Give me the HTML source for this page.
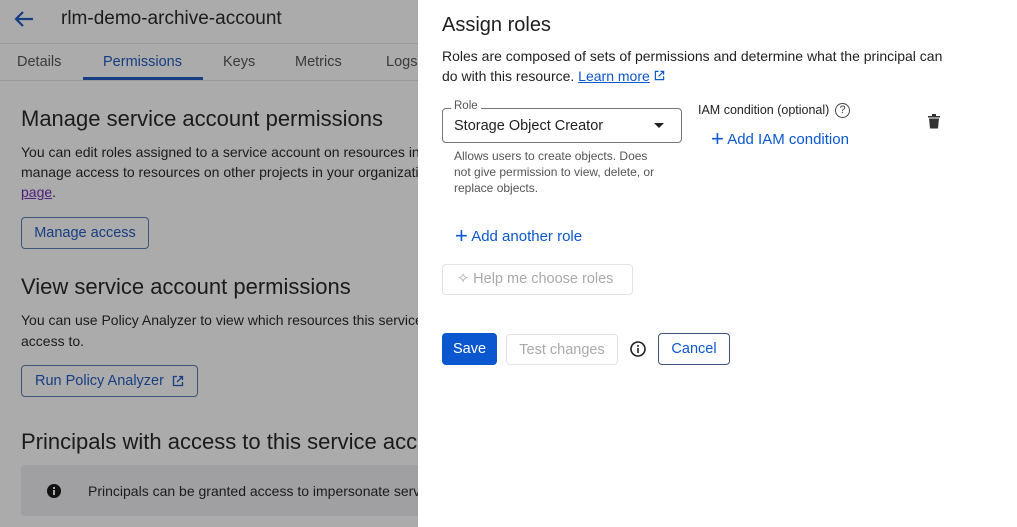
<!DOCTYPE html>
<html><head><meta charset="utf-8"><style>
*{margin:0;padding:0;box-sizing:border-box}
body{width:1017px;height:527px;overflow:hidden;position:relative;font-family:"Liberation Sans",Arial,sans-serif;background:#fff}
.left{position:absolute;left:0;top:0;width:418px;height:527px;background:#ababab;overflow:hidden;color:#1b1b1b}
.a{position:absolute;white-space:nowrap}
.right{position:absolute;left:418px;top:0;width:599px;height:527px;background:#fff;color:#1f1f1f}
.btno{position:absolute;border:1px solid #3f5478;border-radius:4px;color:#173d82;font-size:14.5px;display:flex;align-items:center;justify-content:center}
</style></head><body>
<div class="left">
  <svg class="a" style="left:13px;top:10px" width="22" height="18" viewBox="0 0 22 18"><path d="M20 9H3M10 2L3 9l7 7" stroke="#173d82" stroke-width="2.2" fill="none"/></svg>
  <div class="a" style="left:61px;top:8px;font-size:19px;color:#1b1b1b">rlm-demo-archive-account</div>
  <div class="a" style="left:0;top:43px;width:418px;height:1px;background:#999"></div>
  <div class="a" style="left:17px;top:54px;font-size:14.5px;color:#3a3a3a">Details</div>
  <div class="a" style="left:103px;top:54px;font-size:14.5px;color:#173d82">Permissions</div>
  <div class="a" style="left:223px;top:54px;font-size:14.5px;color:#3a3a3a">Keys</div>
  <div class="a" style="left:295px;top:54px;font-size:14.5px;color:#3a3a3a">Metrics</div>
  <div class="a" style="left:386px;top:54px;font-size:14.5px;color:#3a3a3a">Logs</div>
  <div class="a" style="left:83px;top:77px;width:120px;height:3px;background:#173d82"></div>
  <div class="a" style="left:0;top:80px;width:418px;height:1px;background:#999"></div>
  <div class="a" style="left:21px;top:106px;font-size:22px">Manage service account permissions</div>
  <div class="a" style="left:21px;top:142px;font-size:14px;line-height:20px">You can edit roles assigned to a service account on resources in<br>manage access to resources on other projects in your organizati<br><span style="color:#4a1d7a;text-decoration:underline">page</span>.</div>
  <div class="btno" style="left:21px;top:217px;width:128px;height:32px">Manage access</div>
  <div class="a" style="left:21px;top:274px;font-size:22px">View service account permissions</div>
  <div class="a" style="left:21px;top:310px;font-size:14px;line-height:21px">You can use Policy Analyzer to view which resources this service<br>access to.</div>
  <div class="btno" style="left:21px;top:365px;width:177px;height:32px">Run Policy Analyzer&nbsp;&nbsp;<svg width="12" height="12" viewBox="0 0 12 12"><path d="M5 1.5H1.5v9h9V7M7 1.5h3.5V5M10.5 1.5L5 7" stroke="#173d82" stroke-width="1.3" fill="none"/></svg></div>
  <div class="a" style="left:21px;top:429px;font-size:22px">Principals with access to this service acc</div>
  <div class="a" style="left:21px;top:465px;width:420px;height:51px;background:#a0a0a3;border-radius:4px"></div>
  <svg class="a" style="left:47px;top:484px" width="14" height="14" viewBox="0 0 14 14"><circle cx="7" cy="7" r="7" fill="#111"/><rect x="6" y="6" width="2" height="5" fill="#aaa"/><rect x="6" y="3" width="2" height="2" fill="#aaa"/></svg>
  <div class="a" style="left:88px;top:483px;font-size:14px">Principals can be granted access to impersonate serv</div>
</div>
<div class="right">
  <div class="a" style="left:24px;top:14px;font-size:20px">Assign roles</div>
  <div class="a" style="left:24px;top:46px;font-size:14px;line-height:20px">Roles are composed of sets of permissions and determine what the principal can<br>do with this resource. <span style="color:#0b57d0;text-decoration:underline">Learn more</span> <svg width="11" height="11" viewBox="0 0 12 12"><path d="M5 1.5H1.5v9h9V7M7 1.5h3.5V5M10.5 1.5L5 7" stroke="#0b57d0" stroke-width="1.3" fill="none"/></svg></div>
  <div class="a" style="left:24px;top:108px;width:240px;height:35px;border:1px solid #747775;border-radius:4px"></div>
  <div class="a" style="left:33px;top:100px;font-size:11.5px;color:#555;background:#fff;padding:0 3px">Role</div>
  <div class="a" style="left:36px;top:118px;font-size:14.5px">Storage Object Creator</div>
  <div class="a" style="left:236px;top:123px;width:0;height:0;border-left:5px solid transparent;border-right:5px solid transparent;border-top:5px solid #1f1f1f"></div>
  <div class="a" style="left:36px;top:148px;font-size:12px;line-height:16px;color:#555">Allows users to create objects. Does<br>not give permission to view, delete, or<br>replace objects.</div>
  <div class="a" style="left:280px;top:103px;font-size:12.5px">IAM condition (optional)</div>
  <div class="a" style="left:417px;top:103px;width:15px;height:15px;border:1.3px solid #444;border-radius:50%;font-size:11px;text-align:center;line-height:13px;color:#444">?</div>
  <div class="a" style="left:293px;top:124px;font-size:15px;color:#0b57d0"><span style="font-size:22px;position:relative;top:2px">+</span> Add IAM condition</div>
  <svg class="a" style="left:510px;top:114px" width="12" height="15" viewBox="0 0 12 15"><path d="M0 2h12v1.5H0zM4 0h4v2H4zM1 4.5h10l-1 10H2z" fill="#333"/></svg>
  <div class="a" style="left:37px;top:221px;font-size:15px;color:#0b57d0"><span style="font-size:22px;position:relative;top:2px">+</span> Add another role</div>
  <div class="a" style="left:24px;top:264px;width:191px;height:31px;border:1px solid #e3e3e3;border-radius:4px"></div>
  <div class="a" style="left:39px;top:271px;font-size:14.5px;color:#aaa">✧ Help me choose roles</div>
  <div class="a" style="left:24px;top:333px;width:55px;height:32px;background:#0b57d0;border-radius:4px;color:#fff;font-size:14.5px;text-align:center;line-height:32px">Save</div>
  <div class="a" style="left:88px;top:334px;width:112px;height:31px;border:1px solid #e3e3e3;border-radius:4px;color:#aaa;font-size:14.5px;text-align:center;line-height:31px">Test changes</div>
  <svg class="a" style="left:212px;top:341px" width="16" height="16" viewBox="0 0 16 16"><circle cx="8" cy="8" r="7" fill="none" stroke="#222" stroke-width="1.6"/><rect x="7.2" y="7" width="1.6" height="5" fill="#222"/><rect x="7.2" y="4" width="1.6" height="1.8" fill="#222"/></svg>
  <div class="a" style="left:240px;top:333px;width:72px;height:32px;border:1px solid #3f5478;border-radius:4px;color:#0b57d0;font-size:14.5px;text-align:center;line-height:30px">Cancel</div>
</div>
</body></html>
